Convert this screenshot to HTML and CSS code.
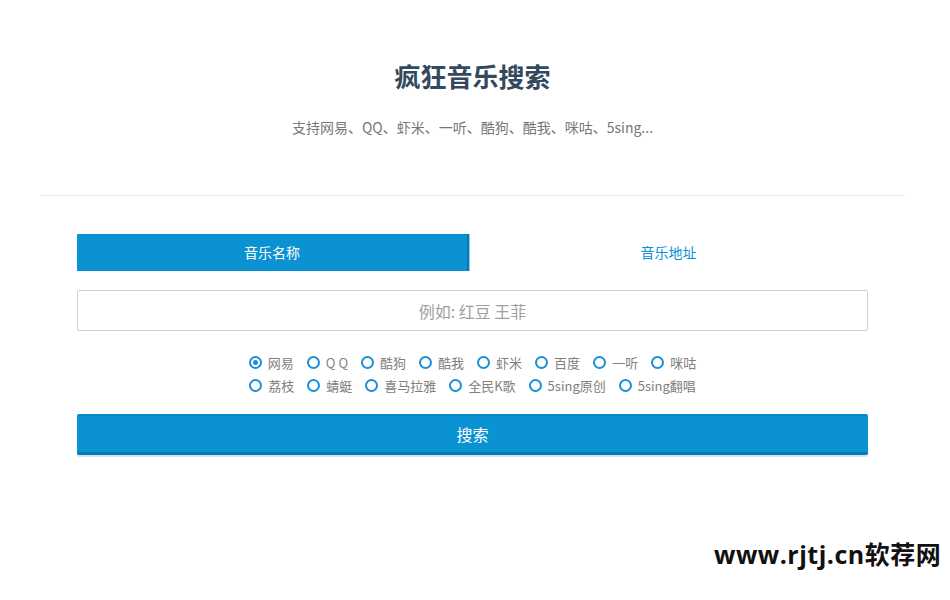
FILE: index.html
```html
<!DOCTYPE html>
<html lang="zh-CN">
<head>
	<meta charset="utf-8"/>
	<title>疯狂音乐搜索</title>
	<link rel="stylesheet" href="styles.css">
</head>
<body>
<div class="music-wrap">
	<div class="music-head">
		<h1 class="music-head__title">疯狂音乐搜索</h1>
		<p class="music-head__sub">支持网易、QQ、虾米、一听、酷狗、酷我、咪咕、5sing...</p>
	</div>
	<div class="music-form">
		<div class="music-tab">
			<a class="music-tab__item music-tab__item_on" href="javascript:void(0);">音乐名称</a>
			<a class="music-tab__item" href="javascript:void(0);">音乐地址</a>
		</div>
		<input class="music-input" type="text" placeholder="例如: 红豆 王菲"/>
		<div class="music-type">
			<div class="music-type__row">
				<label class="music-type__item"><span class="radio radio_on"></span>网易</label>
				<label class="music-type__item"><span class="radio"></span>Q Q</label>
				<label class="music-type__item"><span class="radio"></span>酷狗</label>
				<label class="music-type__item"><span class="radio"></span>酷我</label>
				<label class="music-type__item"><span class="radio"></span>虾米</label>
				<label class="music-type__item"><span class="radio"></span>百度</label>
				<label class="music-type__item"><span class="radio"></span>一听</label>
				<label class="music-type__item"><span class="radio"></span>咪咕</label>
			</div>
			<div class="music-type__row">
				<label class="music-type__item"><span class="radio"></span>荔枝</label>
				<label class="music-type__item"><span class="radio"></span>蜻蜓</label>
				<label class="music-type__item"><span class="radio"></span>喜马拉雅</label>
				<label class="music-type__item"><span class="radio"></span>全民K歌</label>
				<label class="music-type__item"><span class="radio"></span>5sing原创</label>
				<label class="music-type__item"><span class="radio"></span>5sing翻唱</label>
			</div>
		</div>
		<a class="music-btn" href="javascript:void(0);">搜索</a>
	</div>
</div>
<div class="mark">www.rjtj.cn软荐网</div>
</body>
</html>
```

FILE: styles.css
```css
/*基础样式*/
html,body{
	margin: 0;
	padding: 0;
	height: 100%;
	background: #fff;
	font-family: "Noto Sans CJK SC", "Noto Sans", sans-serif;
}
.music-wrap{
	width: 865px;
	margin-left: 40px;
}
/*标题*/
.music-head{
	text-align: center;
	padding-top: 57px;
	padding-bottom: 58px;
	border-bottom: 1px solid #eee;
}
.music-head__title{
	margin: 0;
	font-size: 26px;
	line-height: 38px;
	font-weight: bold;
	color: #34495e;
}
.music-head__sub{
	margin: 22px 0 0;
	font-size: 14px;
	line-height: 20px;
	color: #777;
}
/*表单*/
.music-form{
	padding: 38px 37px 0;
}
.music-tab{
	display: flex;
	height: 37px;
}
.music-tab__item{
	flex: 1;
	display: block;
	text-align: center;
	line-height: 37px;
	font-size: 14px;
	color: #0a8fd2;
	text-decoration: none;
}
.music-tab__item_on{
	flex: 0 0 392px;
	box-sizing: border-box;
	background: #0b92d3;
	color: #fff;
	border-right: 2px solid #0779b3;
	box-shadow: 1px 0 0 #8fcdf0;
}
.music-input{
	display: block;
	box-sizing: border-box;
	width: 100%;
	height: 41px;
	margin-top: 19px;
	border: 1px solid #d0d0d0;
	border-radius: 2px;
	text-align: center;
	font-size: 16px;
	font-family: inherit;
	outline: none;
}
.music-input::placeholder{
	color: #a0a0a0;
}
.music-type{
	padding-top: 20px;
	font-size: 13px;
	color: #808080;
}
.music-type__row{
	display: flex;
	justify-content: center;
	gap: 13px;
	height: 23px;
	line-height: 23px;
}
.music-type__item{
	display: flex;
	align-items: center;
}
.radio{
	box-sizing: border-box;
	width: 13px;
	height: 13px;
	margin-right: 6px;
	border: 2px solid #1a8fd6;
	border-radius: 50%;
	position: relative;
}
.radio_on:after{
	content: '';
	position: absolute;
	left: 2px;
	top: 2px;
	width: 5px;
	height: 5px;
	border-radius: 50%;
	background: #1a8fd6;
}
.music-btn{
	display: block;
	box-sizing: border-box;
	height: 41px;
	margin-top: 17px;
	background: #0b92d3;
	border-top: 2px solid #0687c8;
	border-bottom: 3px solid #0779b3;
	border-radius: 2px;
	box-shadow: 0 2px 0 #d6e4ee;
	text-align: center;
	line-height: 36px;
	font-size: 16px;
	color: #fff;
	text-decoration: none;
}
/*水印*/
.mark{
	position: absolute;
	left: 714px;
	top: 535px;
	font-size: 25px;
	line-height: 38px;
	font-weight: bold;
	color: #111;
	font-family: "Open Sans", "Noto Sans CJK SC", sans-serif;
	letter-spacing: 0.5px;
}
```
